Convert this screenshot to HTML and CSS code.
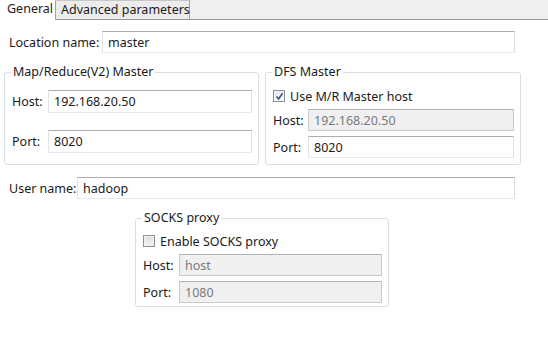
FILE: index.html
```html
<!DOCTYPE html>
<html lang="en">
<head>
    <meta charset="UTF-8">
    <meta name="viewport" content="width=device-width, initial-scale=1.0">
    <title>Hadoop location</title>
    <link rel="stylesheet" href="styles.css">
</head>
<body>
    <div class="tabs">
        <div class="tab tab-on">General</div>
        <div class="tab">Advanced parameters</div>
        <div class="tab-fill"></div>
    </div>

    <div class="page">
        <div class="row row-loc">
            <span class="lbl">Location name:</span>
            <input class="field field-loc" type="text" value="master">
        </div>

        <div class="groups">
            <fieldset class="group group-mr">
                <legend>Map/Reduce(V2) Master</legend>
                <div class="grid grid-mr">
                    <span class="lbl">Host:</span>
                    <input class="field" type="text" value="192.168.20.50">
                    <span class="lbl">Port:</span>
                    <input class="field" type="text" value="8020">
                </div>
            </fieldset>

            <fieldset class="group group-dfs">
                <legend>DFS Master</legend>
                <div class="check">
                    <span class="box box-on">
                        <svg width="9" height="9" viewBox="0 0 9 9"><path d="M1.5 4.5 L3.6 7 L7.6 1.2" fill="none" stroke="#3d4f8a" stroke-width="1.6"/></svg>
                    </span>
                    <span>Use M/R Master host</span>
                </div>
                <div class="grid grid-small">
                    <span class="lbl">Host:</span>
                    <input class="field field-off" type="text" value="192.168.20.50" disabled>
                    <span class="lbl">Port:</span>
                    <input class="field" type="text" value="8020">
                </div>
            </fieldset>
        </div>

        <div class="row row-user">
            <span class="lbl">User name:</span>
            <input class="field field-user" type="text" value="hadoop">
        </div>

        <fieldset class="group group-socks">
            <legend>SOCKS proxy</legend>
            <div class="check">
                <span class="box"></span>
                <span>Enable SOCKS proxy</span>
            </div>
            <div class="grid grid-small">
                <span class="lbl">Host:</span>
                <input class="field field-off" type="text" value="host" disabled>
                <span class="lbl">Port:</span>
                <input class="field field-off" type="text" value="1080" disabled>
            </div>
        </fieldset>
    </div>
</body>
</html>
```

FILE: styles.css
```css
*{ margin: 0; padding: 0; box-sizing: border-box;}
body{ background: #fff; color: #1a1a1a; font-family: "Noto Sans", "Open Sans", sans-serif; font-size: 12.5px; width: 548px; height: 355px; overflow: hidden;}

/* tab strip */
.tabs{ display: flex; height: 20px;}
.tab{ flex-shrink: 0; height: 20px; line-height: 18px; white-space: nowrap;}
.tab-on{ width: 55px; padding-left: 7px; background: #fff;}
.tab:not(.tab-on){ width: 135px; padding-left: 5px; background: #ececec; border: 1px solid #a3a3a3; border-bottom-color: #9a9a9a; border-top-color: #c8c8c8;}
.tab-fill{ flex: 1; background: #f0f0f0; border-bottom: 1px solid #9a9a9a;}

.page{ padding-top: 11px;}

.row{ display: flex; align-items: center; height: 22px; padding: 0 33px 0 9px;}
.row-user{ margin-top: 12px;}
.lbl{ white-space: nowrap;}

.field{ height: 22px; font: inherit; color: #1a1a1a; padding: 0 5px; background: #fff; border: 1px solid; border-color: #abadb3 #dbdfe6 #e3e9ef #e2e3ea; outline: none; min-width: 0;}
.field-loc{ margin-left: auto; width: 413px;}
.field-user{ margin-left: auto; width: 438px;}
.field-off{ background: #f0f0f0; color: #7a7a7a; border-color: #adb2b5 #c8cbcd #c8cbcd #c8cbcd;}

/* group boxes */
.groups{ display: flex; gap: 6px; padding-left: 4px; margin-top: 11px;}
.group{ border: 1px solid #d5dfe5; border-radius: 3px; padding: 0 6px 0 7px;}
.group legend{ margin-left: -1px; padding: 0 2px; line-height: 16px;}
.group-mr{ width: 255px; height: 101px;}
.group-dfs{ width: 256px; height: 101px;}
.group-socks{ width: 254px; height: 97px; margin: 11px 0 0 135px;}

.grid{ display: grid; grid-template-columns: 36px 1fr; align-items: center;}
.grid-mr{ margin-top: 10px; row-gap: 17px;}
.grid-mr .field{ height: 23px;}
.group-dfs .grid{ grid-template-columns: 35px 1fr;}
.grid-small{ margin-top: 5px; row-gap: 5px;}

.check{ display: flex; align-items: center; gap: 5px; margin-top: 8px; height: 16px;}
.group-socks .check{ margin-top: 7px;}
.box{ display: flex; align-items: center; justify-content: center; width: 12px; height: 12px; border: 1px solid #8e8f8f; background: linear-gradient(#dcdcdc, #f6f6f6); box-shadow: inset 0 0 0 1px #f4f4f4;}
.box-on{ background: linear-gradient(#e4e8f0, #fafbfd);}
```
